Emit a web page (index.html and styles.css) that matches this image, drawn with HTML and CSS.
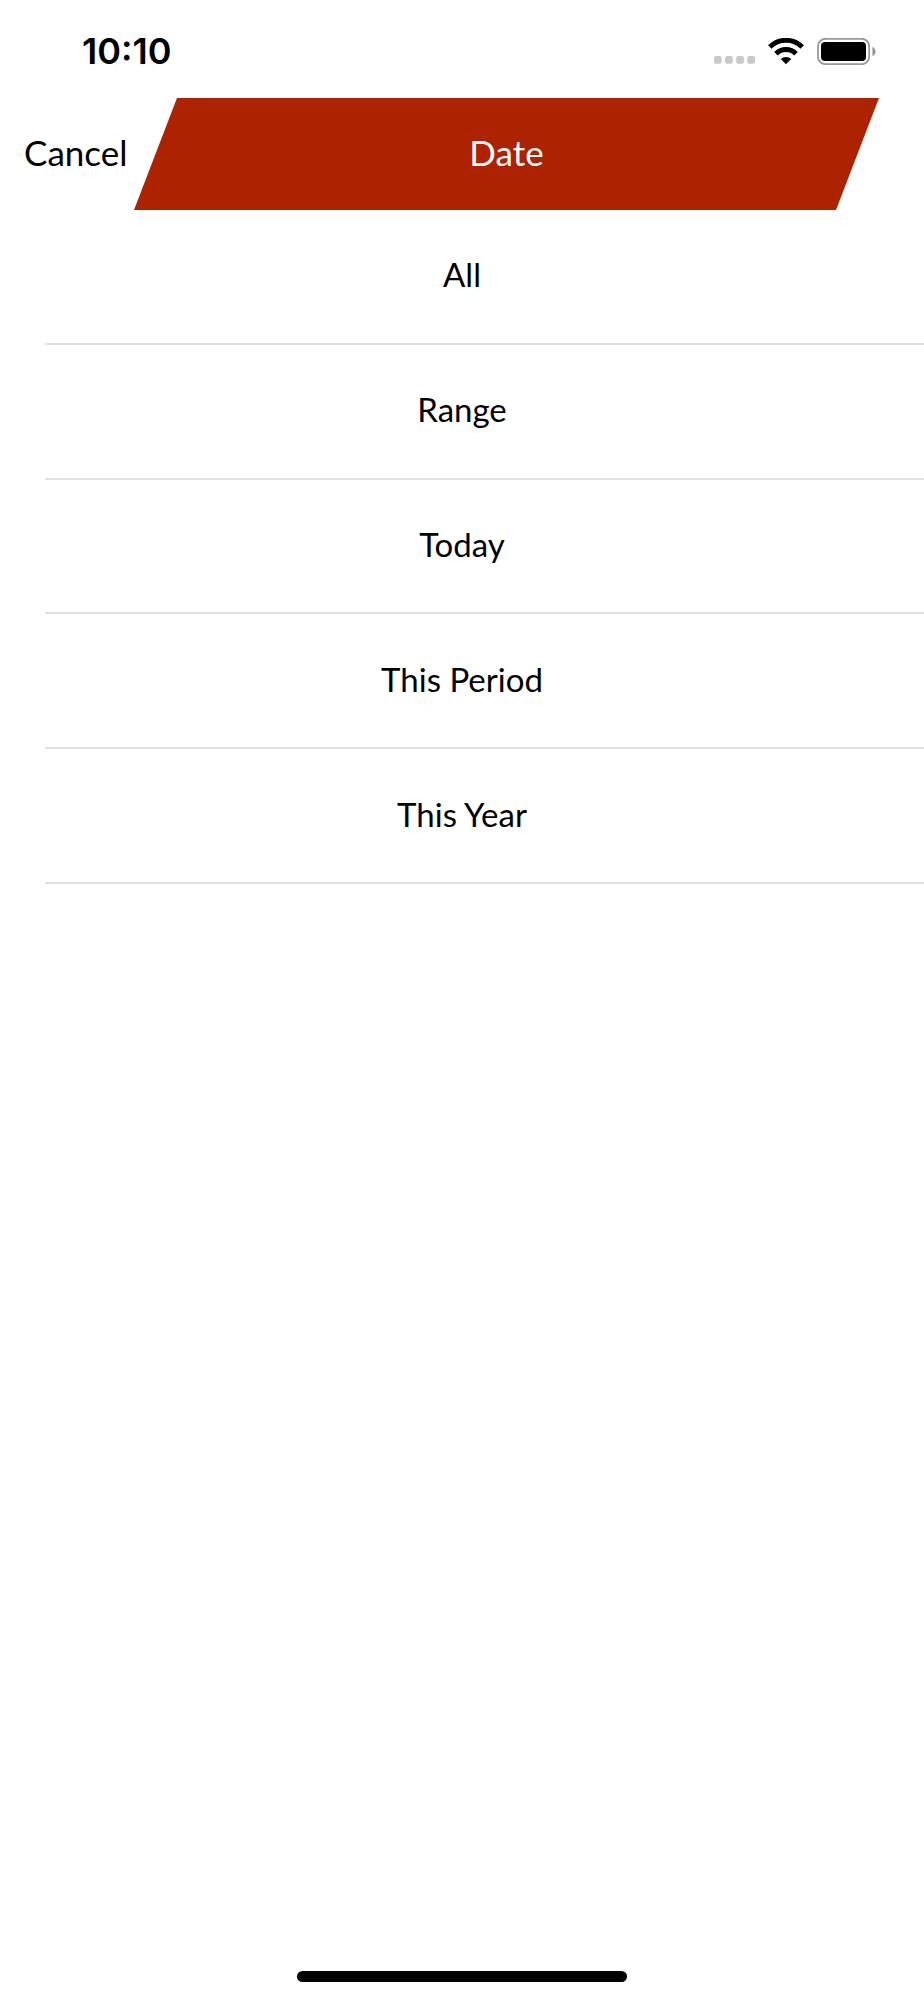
FILE: index.html
```html
<!DOCTYPE html>
<html lang="en">
<head>
<meta charset="utf-8">
<meta name="viewport" content="width=device-width, initial-scale=1">
<title>Date</title>
<link rel="stylesheet" href="styles.css">
</head>
<body>
<div class="screen">
  <div class="status-bar">
    <time class="clock">10:10</time>
    <div class="status-icons">
      <svg class="cellular" width="41" height="27" viewBox="0 0 41 27" fill="#c9c9c9" aria-hidden="true">
        <rect x="0" y="18" width="7.700" height="7.700" rx="2"/>
        <rect x="11.100" y="18" width="7.700" height="7.700" rx="2"/>
        <rect x="22.200" y="18" width="7.700" height="7.700" rx="2"/>
        <rect x="33.300" y="18" width="7.700" height="7.700" rx="2"/>
      </svg>
      <svg class="wifi" width="36" height="27" viewBox="0 0 36 27" aria-hidden="true">
        <path d="M1.800 9A23 23 0 0 1 34.200 9" fill="none" stroke="#000" stroke-width="5"/>
        <path d="M8 15.800A14 14 0 0 1 28 15.800" fill="none" stroke="#000" stroke-width="5"/>
        <path d="M18 26.300L12.800 21.100A7.600 7.600 0 0 1 23.200 21.100Z" fill="#000"/>
      </svg>
      <svg class="battery" width="59" height="27" viewBox="0 0 59 27" aria-hidden="true">
        <rect x="1" y=".8" width="51.200" height="25.400" rx="7.500" fill="none" stroke="#999" stroke-width="1.800"/>
        <rect x="4" y="4" width="45" height="19" rx="4" fill="#000"/>
        <path d="M55.500 9C59.500 10.800 59.500 16.200 55.500 18Z" fill="#8e8e8e"/>
      </svg>
    </div>
  </div>
  <header class="nav">
    <button class="cancel" type="button">Cancel</button>
    <h1 class="title">Date</h1>
  </header>
  <main class="options">
    <button class="option" type="button">All</button>
    <button class="option" type="button">Range</button>
    <button class="option" type="button">Today</button>
    <button class="option" type="button">This Period</button>
    <button class="option" type="button">This Year</button>
  </main>
  <div class="home-indicator"></div>
</div>
</body>
</html>
```
FILE: styles.css
```css
* {
  box-sizing: border-box;
}

body {
  margin: 0;
  background: #fff;
  color: #000;
  font-family: Lato, sans-serif;
}

button {
  margin: 0;
  padding: 0;
  border: 0;
  background: none;
  color: inherit;
  font: inherit;
  cursor: pointer;
}

.screen {
  display: flex;
  flex-direction: column;
  min-height: 100vh;
}

.status-bar {
  display: flex;
  align-items: center;
  justify-content: space-between;
  height: 98px;
  padding: 4px 48px 0 82px;
}

.clock {
  font-family: Inter, sans-serif;
  font-size: 36px;
  font-weight: 600;
}

.status-icons {
  display: flex;
  gap: 13px;
}

.nav {
  display: flex;
  height: 112px;
  padding-right: 45px;
}

.cancel {
  width: 134px;
  padding: 0 0 4px 24px;
  font-size: 35px;
  text-align: left;
  white-space: nowrap;
}

.title {
  display: flex;
  flex: 1;
  align-items: center;
  justify-content: center;
  margin: 0;
  padding-bottom: 4px;
  background: #ad2201;
  clip-path: polygon(43px 0, 100% 0, calc(100% - 43px) 100%, 0 100%);
  color: #fff;
  font-size: 35px;
  font-weight: 400;
}

.options {
  display: grid;
  grid-auto-rows: 1fr;
  height: 674px;
  padding-left: 45px;
}

.option {
  padding: 0 45px 4px 0;
  border-bottom: 2px solid #e1e1e3;
  font-size: 33px;
}

.home-indicator {
  width: 330px;
  height: 11px;
  margin: auto auto 18px;
  border-radius: 6px;
  background: #000;
}
```
